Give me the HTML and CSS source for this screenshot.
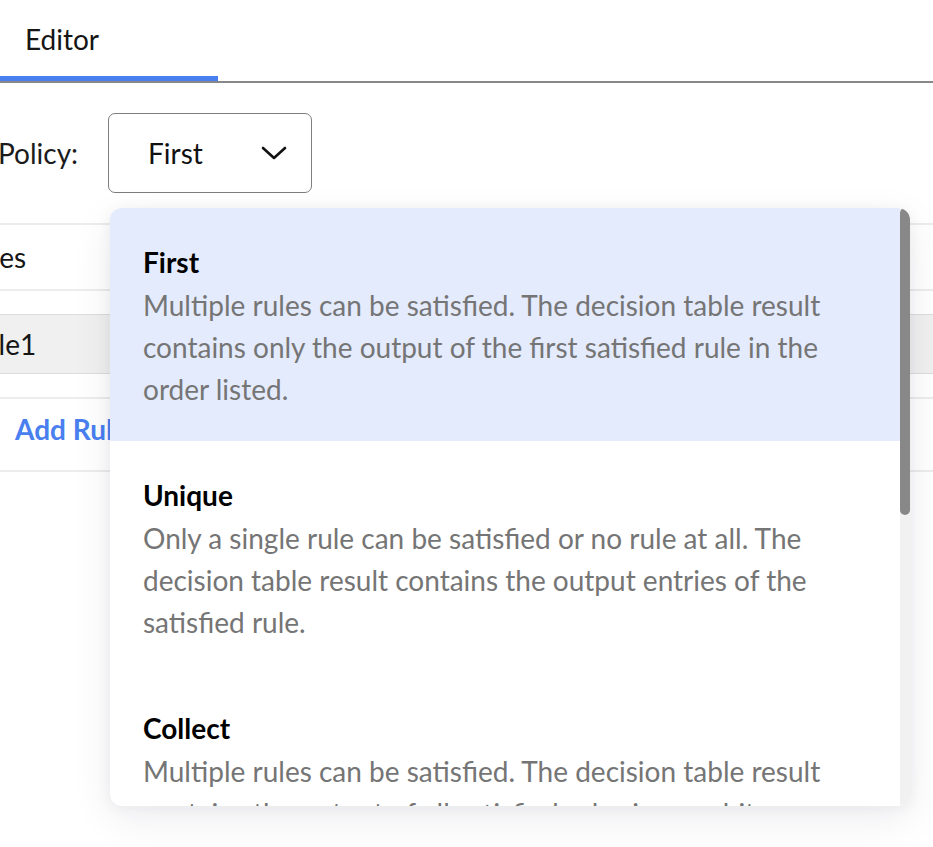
FILE: index.html
```html
<!DOCTYPE html>
<html lang="en">
<head>
<meta charset="utf-8">
<title>Decision table editor</title>
<link rel="stylesheet" href="styles.css">
</head>
<body>
<div class="page">
  <div class="tabs">
    <div class="tab active">Editor</div>
  </div>

  <div class="policy-row">
    <span class="policy-label">Policy:</span>
    <div class="select">
      <span class="select-value">First</span>
      <svg class="chevron" width="26" height="14" viewBox="0 0 26 14" aria-hidden="true">
        <path d="M2 2 L13 12 L24 2" fill="none" stroke="#111" stroke-width="2.6" stroke-linecap="round" stroke-linejoin="round"/>
      </svg>
    </div>
  </div>

  <div class="table">
    <div class="row row-head"><span class="cell head">Rules</span></div>
    <div class="spacer"></div>
    <div class="row row-rule"><span class="cell rule">Rule1</span></div>
    <div class="spacer"></div>
    <div class="row row-add"><span class="cell add">Add Rule</span></div>
  </div>

  <div class="watermark wm1">VER0s0Tq</div>

  <div class="dropdown">
    <ul class="options">
      <li class="option selected">
        <div class="opt-title">First</div>
        <div class="opt-desc">Multiple rules can be satisfied. The decision table result contains only the output of the first satisfied rule in the order listed.</div>
      </li>
      <li class="option">
        <div class="opt-title">Unique</div>
        <div class="opt-desc">Only a single rule can be satisfied or no rule at all. The decision table result contains the output entries of the satisfied rule.</div>
      </li>
      <li class="option">
        <div class="opt-title">Collect</div>
        <div class="opt-desc">Multiple rules can be satisfied. The decision table result contains the output of all satisfied rules in an arbitrary order as a list.</div>
      </li>
      <li class="option">
        <div class="opt-title">Rule order</div>
        <div class="opt-desc">Multiple rules can be satisfied. The decision table result contains the output of all satisfied rules in the order of the rules.</div>
      </li>
    </ul>
    <div class="scrollbar"><div class="scroll-thumb"></div></div>
  </div>
</div>
</body>
</html>
```

FILE: styles.css
```css
html, body {
  margin: 0;
  padding: 0;
  background: #ffffff;
  font-family: Lato, "Noto Sans", sans-serif;
  color: #1b1b1b;
  overflow: hidden;
}

.page {
  position: relative;
  width: 933px;
  height: 847px;
  overflow: hidden;
}

/* Tabs */
.tabs {
  display: flex;
  height: 81px;
  border-bottom: 2px solid #888888;
}

.tab {
  width: 218px;
  box-sizing: border-box;
  padding: 24px 0 0 25px;
  font-size: 28px;
  line-height: 30px;
  color: #151515;
}

.tab.active {
  border-bottom: 5px solid #4a7ff0;
}

/* Policy row */
.policy-row {
  display: flex;
  align-items: center;
  gap: 30px;
  margin-top: 30px;
  margin-left: -2px;
}

.policy-label {
  font-size: 28px;
  color: #1b1b1b;
}

.select {
  display: flex;
  align-items: center;
  justify-content: space-between;
  width: 204px;
  height: 80px;
  box-sizing: border-box;
  border: 1.5px solid #7d7d7d;
  border-radius: 7px;
  padding: 0 24px 0 39px;
}

.select-value {
  font-size: 28px;
  color: #111;
}

.chevron {
  display: block;
}

/* Table behind the menu */
.table {
  margin-top: 30px;
}

.row {
  display: flex;
  align-items: center;
  box-sizing: border-box;
}

.row-head {
  height: 68px;
  border-top: 2px solid #ececec;
  border-bottom: 2px solid #ececec;
}

.spacer {
  height: 23px;
}

.row-rule {
  height: 60px;
  background: #f0f0f0;
  border-top: 1px solid #dcdcdc;
  border-bottom: 1px solid #dcdcdc;
}

.row-add {
  height: 75px;
  padding-bottom: 11px;
  border-top: 2px solid #ececec;
  border-bottom: 2px solid #ececec;
}

.cell {
  font-size: 28px;
  color: #151515;
}

.cell.head {
  margin-left: -40px;
}

.cell.rule {
  margin-left: -34px;
}

.cell.add {
  margin-left: 15px;
  font-weight: 700;
  color: #4a7ff0;
}

/* faint watermark */
.watermark {
  position: absolute;
  font-family: "Open Sans", sans-serif;
  font-size: 30px;
  color: rgba(0, 0, 0, 0.022);
  pointer-events: none;
  white-space: nowrap;
}

.wm1 { left: 723px; top: 45px; }

/* Dropdown menu */
.dropdown {
  position: absolute;
  left: 110px;
  top: 208px;
  width: 800px;
  height: 598px;
  background: #ffffff;
  border-radius: 12px;
  box-shadow: 0 12px 40px rgba(20, 30, 60, 0.08), 0 2px 14px rgba(20, 30, 60, 0.05);
  overflow: hidden;
  display: flex;
}

.options {
  list-style: none;
  margin: 0;
  padding: 0;
  flex: 1;
  height: 598px;
  overflow: hidden;
}

.scrollbar {
  width: 10px;
  height: 598px;
  background: #f1f1f1;
}

.scroll-thumb {
  height: 307px;
  background: #888888;
  border-radius: 5px;
}

.option {
  padding: 32px 45px 31px 33px;
}

.option.selected {
  background: #e4ebfd;
}

.opt-title {
  font-size: 28px;
  line-height: 44px;
  font-weight: 700;
  color: #000;
}

.opt-desc {
  font-size: 28px;
  line-height: 42px;
  color: #757575;
}
```
